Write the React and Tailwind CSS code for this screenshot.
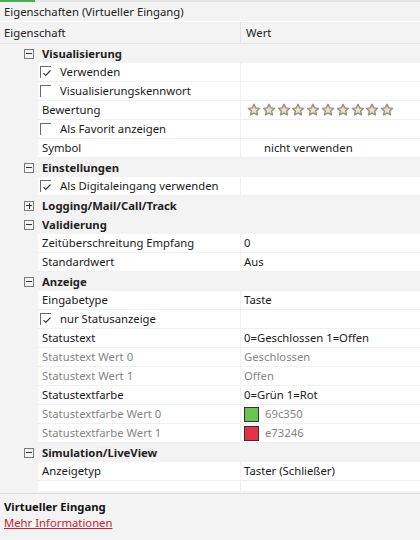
import React from "react";

const Star = () => (
  <svg width="14" height="14" viewBox="0 0 24 24" className="shrink-0">
    <path
      d="M12 2.2l2.9 6.2 6.7.8-5 4.6 1.4 6.7L12 17.2l-6 3.3 1.4-6.7-5-4.6 6.7-.8z"
      fill="#e6e1d3"
      stroke="#958c7a"
      strokeWidth="2.3"
      strokeLinejoin="round"
    />
  </svg>
);

const Expander = ({ open = true }) => (
  <div className="relative w-[10px] h-[10px] border border-[#7a7a7a] bg-[#f3f3f3] shrink-0">
    <div className="absolute left-[1px] right-[1px] top-[3.5px] h-px bg-[#333]" />
    {!open && <div className="absolute top-[1px] bottom-[1px] left-[3.5px] w-px bg-[#333]" />}
  </div>
);

const Check = ({ checked }) => (
  <div className="relative w-[11px] h-[12px] border-l border-t border-[#6a6a6a] shrink-0">
    {checked && (
      <svg width="10" height="10" viewBox="0 0 10 10" className="absolute left-[1px] top-[1px]">
        <path d="M1.5 5.2l2.3 2.3 4.7-5" fill="none" stroke="#333" strokeWidth="1.1" />
      </svg>
    )}
  </div>
);

const Group = ({ label, open = true }) => (
  <div className="flex h-[19px] items-center bg-[#f3f3f3]">
    <div className="w-[24px] shrink-0" />
    <Expander open={open} />
    <div className="pl-[8px] font-bold text-[#222]">{label}</div>
  </div>
);

const Row = ({ label, value, gray, check, checked }) => (
  <div className="flex h-[19px]">
    <div className="w-[38px] shrink-0" />
    <div className="flex flex-1 bg-white border-b border-[#f0f0f0]">
      <div
        className={
          "w-[203px] shrink-0 border-r border-[#f0f0f0] flex items-center whitespace-nowrap overflow-hidden " +
          (check ? "pl-[2px]" : "pl-[4px]") +
          (gray ? " text-[#858585]" : " text-[#1a1a1a]")
        }
      >
        {check && <Check checked={checked} />}
        {check ? <span className="pl-[9px]">{label}</span> : label}
      </div>
      <div className={"flex-1 flex items-center pl-[3px] whitespace-nowrap " + (gray ? "text-[#858585]" : "text-[#1a1a1a]")}>
        {value}
      </div>
    </div>
  </div>
);

export default function App() {
  return (
    <div
      className="w-[420px] h-[540px] bg-[#f3f3f3] flex flex-col text-[11.3px] leading-none overflow-hidden"
      style={{ fontFamily: '"Noto Sans", "Open Sans", sans-serif' }}
    >
      <div className="flex h-[2px]">
        <div className="w-[35px] bg-[#4caf50]" />
        <div className="flex-1 bg-[#e6e6e6]" />
      </div>
      <div className="h-[20px] flex items-center pl-[4px] text-[#222] border-b border-white">
        Eigenschaften (Virtueller Eingang)
      </div>
      <div className="h-[22px] flex bg-[#f3f3f3] border-b border-[#e3e3e3]">
        <div className="w-[241px] flex items-center pl-[4px] text-[#222] border-r border-[#e3e3e3]">Eigenschaft</div>
        <div className="flex-1 flex items-center pl-[5px] text-[#222]">Wert</div>
      </div>

      <Group label="Visualisierung" />
      <Row label="Verwenden" check checked />
      <Row label="Visualisierungskennwort" check />
      <Row
        label="Bewertung"
        value={
          <div className="flex gap-[0.8px] pl-[3px]">
            {Array.from({ length: 10 }).map((_, i) => (
              <Star key={i} />
            ))}
          </div>
        }
      />
      <Row label="Als Favorit anzeigen" check />
      <Row label="Symbol" value={<span className="pl-[20px]">nicht verwenden</span>} />
      <Group label="Einstellungen" />
      <Row label="Als Digitaleingang verwenden" check checked />
      <Group label="Logging/Mail/Call/Track" open={false} />
      <Group label="Validierung" />
      <Row label="Zeitüberschreitung Empfang" value="0" />
      <Row label="Standardwert" value="Aus" />
      <Group label="Anzeige" />
      <Row label="Eingabetype" value="Taste" />
      <Row label="nur Statusanzeige" check checked />
      <Row label="Statustext" value="0=Geschlossen 1=Offen" />
      <Row label="Statustext Wert 0" value="Geschlossen" gray />
      <Row label="Statustext Wert 1" value="Offen" gray />
      <Row label="Statustextfarbe" value="0=Grün 1=Rot" />
      <Row
        label="Statustextfarbe Wert 0"
        gray
        value={
          <div className="flex items-center gap-[6px]">
            <div className="w-[15px] h-[15px] bg-[#69c350] border border-[#333]" />
            <span>69c350</span>
          </div>
        }
      />
      <Row
        label="Statustextfarbe Wert 1"
        gray
        value={
          <div className="flex items-center gap-[6px]">
            <div className="w-[15px] h-[15px] bg-[#e73246] border border-[#333]" />
            <span>e73246</span>
          </div>
        }
      />
      <Group label="Simulation/LiveView" />
      <Row label="Anzeigetyp" value="Taster (Schließer)" />
      <div className="flex h-[10px]">
        <div className="w-[38px] shrink-0" />
        <div className="flex flex-1 bg-white">
          <div className="w-[203px] border-r border-[#f0f0f0]" />
        </div>
      </div>
      <div className="h-[3px] border-b border-[#dcdcdc] bg-[#f3f3f3]" />
      <div className="pt-[7px] pl-[4px] flex flex-col gap-[5px]">
        <div className="font-bold text-[#111]">Virtueller Eingang</div>
        <div className="text-[#d0202e] underline">Mehr Informationen</div>
      </div>
    </div>
  );
}
